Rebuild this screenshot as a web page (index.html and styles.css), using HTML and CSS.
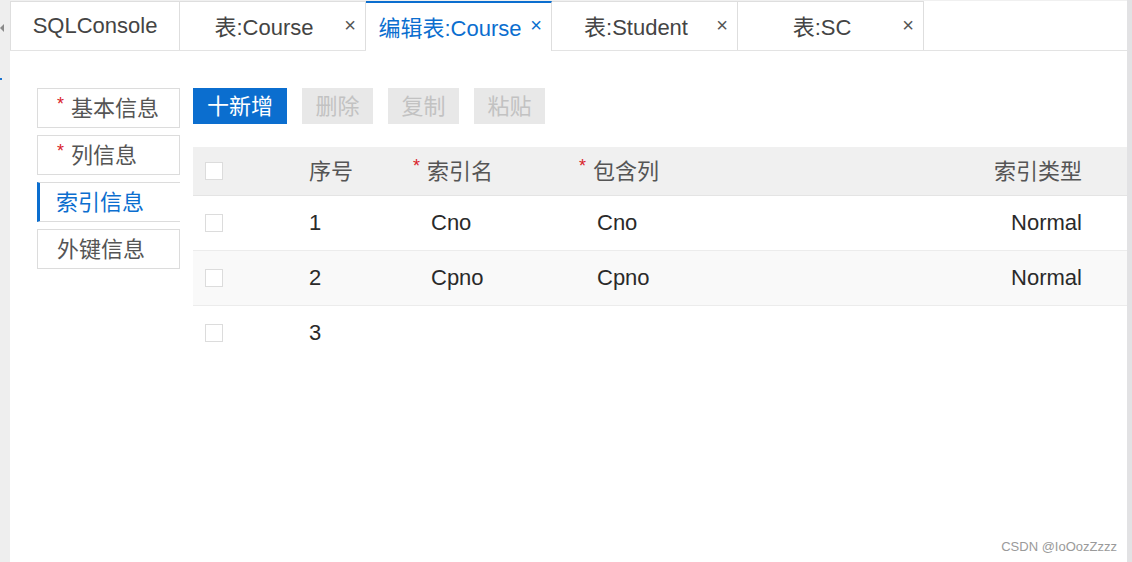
FILE: index.html
```html
<!DOCTYPE html>
<html lang="zh">
<head>
    <meta charset="UTF-8">
    <title>编辑表:Course</title>
    <link rel="stylesheet" href="styles.css">
</head>
<body>
    <div class="side-strip">
        <span class="strip-arrow"></span>
        <span class="strip-dot"></span>
    </div>

    <div class="main">
        <div class="tabs">
            <div class="tab tab-first">SQLConsole</div>
            <div class="tab">表:Course<span class="close">×</span></div>
            <div class="tab active">编辑表:Course<span class="close">×</span></div>
            <div class="tab">表:Student<span class="close">×</span></div>
            <div class="tab">表:SC<span class="close">×</span></div>
        </div>

        <div class="content">
            <div class="nav">
                <div class="nav-item"><span class="req">*</span>基本信息</div>
                <div class="nav-item"><span class="req">*</span>列信息</div>
                <div class="nav-item current">索引信息</div>
                <div class="nav-item">外键信息</div>
            </div>

            <div class="panel">
                <div class="toolbar">
                    <button class="btn primary">十新增</button>
                    <button class="btn" disabled>删除</button>
                    <button class="btn" disabled>复制</button>
                    <button class="btn" disabled>粘贴</button>
                </div>

                <div class="grid">
                    <div class="row head">
                        <div class="cell"><span class="check"></span></div>
                        <div class="cell">序号</div>
                        <div class="cell"><span class="req">*</span>索引名</div>
                        <div class="cell"><span class="req">*</span>包含列</div>
                        <div class="cell right">索引类型</div>
                    </div>
                    <div class="row">
                        <div class="cell"><span class="check"></span></div>
                        <div class="cell">1</div>
                        <div class="cell val">Cno</div>
                        <div class="cell val">Cno</div>
                        <div class="cell right">Normal</div>
                    </div>
                    <div class="row alt">
                        <div class="cell"><span class="check"></span></div>
                        <div class="cell">2</div>
                        <div class="cell val">Cpno</div>
                        <div class="cell val">Cpno</div>
                        <div class="cell right">Normal</div>
                    </div>
                    <div class="row last">
                        <div class="cell"><span class="check"></span></div>
                        <div class="cell">3</div>
                        <div class="cell val"></div>
                        <div class="cell val"></div>
                        <div class="cell right"></div>
                    </div>
                </div>
            </div>
        </div>

        <div class="watermark">CSDN @IoOozZzzz</div>
    </div>

    <div class="right-strip"></div>
</body>
</html>
```

FILE: styles.css
```css
body {
    margin: 0;
    height: 562px;
    overflow: hidden;
    display: flex;
    background: #fff;
    font-family: "Liberation Sans", "Noto Sans CJK SC", sans-serif;
    color: #333;
}
.side-strip {
    width: 10px;
    background: #eeeeee;
    display: flex;
    flex-direction: column;
    padding-top: 24px;
}
.strip-arrow {
    width: 0;
    height: 0;
    border-top: 4px solid transparent;
    border-bottom: 4px solid transparent;
    border-right: 4px solid #8a8a8a;
}
.strip-dot {
    width: 2px;
    height: 2px;
    margin-top: 46px;
    background: #1a73d0;
}
.right-strip {
    width: 5px;
    background: #e2e2e4;
}
.main {
    flex: 1;
    position: relative;
    display: flex;
    flex-direction: column;
}

/* tabs */
.tabs {
    display: flex;
    height: 49px;
    border-top: 1px solid #f0f0f0;
    border-bottom: 1px solid #e3e3e3;
}
.tab {
    position: relative;
    width: 186px;
    box-sizing: border-box;
    padding: 0 17px 3px 0;
    border: 1px solid #dedede;
    border-left: none;
    border-bottom: none;
    display: flex;
    align-items: center;
    justify-content: center;
    font-size: 22px;
    color: #444;
}
.tab-first {
    width: 170px;
    padding: 0;
    border-left: 1px solid #dedede;
}
.tab.active {
    color: #0b6ecf;
    border-top: 2px solid #0b6ecf;
    background: #fff;
    margin-bottom: -1px;
}
.close {
    position: absolute;
    right: 9px;
    top: 12px;
    font-size: 20px;
    color: #555;
}
.tab.active .close {
    color: #0b6ecf;
    top: 11px;
}

/* content */
.content {
    display: flex;
    padding: 37px 0 0 27px;
    gap: 13px;
}
.nav {
    width: 143px;
    display: flex;
    flex-direction: column;
    gap: 7px;
}
.nav-item {
    height: 40px;
    box-sizing: border-box;
    border: 1px solid #dcdcdc;
    padding: 0 0 4px 19px;
    display: flex;
    align-items: center;
    font-size: 22px;
    color: #555;
}
.nav-item.current {
    border-left: 3px solid #0b6ecf;
    border-right: none;
    color: #0b6ecf;
    padding-left: 16px;
}
.req {
    color: #d9222a;
    font-size: 18px;
    margin-right: 7px;
    position: relative;
    top: -2px;
}
.panel {
    flex: 1;
}
.toolbar {
    display: flex;
    gap: 15px;
    height: 36px;
}
.btn {
    width: 71px;
    border: none;
    background: #e8e8e8;
    color: #c2c2c2;
    font-family: inherit;
    font-size: 22px;
    padding: 0 0 5px;
}
.btn.primary {
    width: 94px;
    background: #0b6ecf;
    color: #fff;
}

/* grid */
.grid {
    margin-top: 23px;
}
.row {
    display: grid;
    grid-template-columns: 104px 104px 166px 1fr 200px;
    height: 54px;
    border-bottom: 1px solid #ececec;
    font-size: 22px;
    color: #2a2a2a;
}
.row.head {
    height: 48px;
    background: #f0f0f0;
    color: #555;
    border-bottom-color: #e4e4e4;
}
.row.head .cell {
    padding-bottom: 5px;
}
.row.alt {
    background: #f9f9f9;
}
.row.last {
    border-bottom: none;
}
.cell {
    display: flex;
    align-items: center;
    padding-left: 12px;
}
.cell.val {
    padding-left: 30px;
}
.cell.right {
    justify-content: flex-end;
    padding-right: 45px;
}
.row.head .cell:first-child {
    padding-bottom: 0;
}
.check {
    width: 16px;
    height: 16px;
    border: 1px solid #dcdcdc;
    background: #fff;
}
.watermark {
    position: absolute;
    right: 10px;
    bottom: 8px;
    font-size: 13px;
    color: #9a9a9a;
}
```
